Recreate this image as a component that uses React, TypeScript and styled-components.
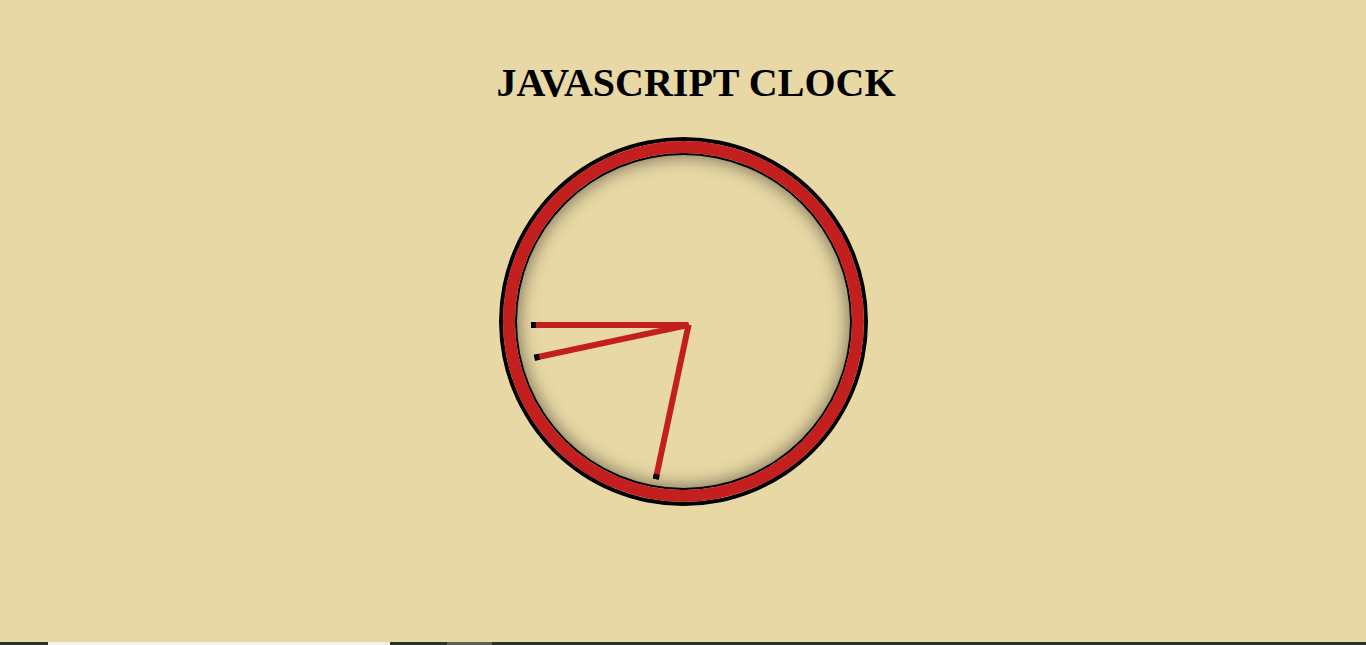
import styled, { createGlobalStyle } from 'styled-components';

// fixed time so the face matches the still picture
const TIME = { hours: 9, minutes: 43, seconds: 32 };

const GlobalStyle = createGlobalStyle`
	html,
	body {
		margin: 0;
		padding: 0;
		background: #e8d8a5;
		font-family: 'Liberation Serif', 'Times New Roman', serif;
	}
`;

const Page = styled.div`
	display: flex;
	flex-direction: column;
	min-height: 100vh;
`;

const Main = styled.main`
	flex: 1;
	display: flex;
	flex-direction: column;
	align-items: center;
	padding-top: 60px;
`;

const Title = styled.h1`
	margin: 0 0 35px 0;
	padding-left: 26px;
	font-size: 40px;
	font-weight: bold;
	line-height: 46px;
	color: #000;
`;

const Clock = styled.div`
	box-sizing: border-box;
	width: 361px;
	height: 361px;
	padding: 16px;
	border: 12px solid #c41f1f;
	border-radius: 50%;
	box-shadow:
		0 0 0 4px #000,
		inset 0 0 0 2px #000,
		inset 0 0 18px 3px rgba(0, 0, 0, 0.5);
`;

const Face = styled.div`
	position: relative;
	width: 100%;
	height: 100%;
`;

const Hand = styled.div`
	position: absolute;
	top: 50%;
	width: 50%;
	height: 6px;
	background: #c41f1f;
	border-left: 5px solid #000;
	transform-origin: 100%;
`;

const Taskbar = styled.div`
	display: flex;
	height: 3px;
	background: #2b312d;
`;

const TaskItem = styled.div<{ $width: number; $offset: number; $color: string }>`
	width: ${(p) => p.$width}px;
	margin-left: ${(p) => p.$offset}px;
	background: ${(p) => p.$color};
`;

const App = () => {
	const hourDeg = TIME.hours * 30 + 90;
	const minDeg = TIME.minutes * 6 + 90;
	const secDeg = TIME.seconds * 6 + 90;

	return (
		<>
			<GlobalStyle />
			<Page>
				<Main>
					<Title>JAVASCRIPT CLOCK</Title>
					<Clock>
						<Face>
							<Hand style={{ transform: `rotate(${hourDeg}deg)` }} />
							<Hand style={{ transform: `rotate(${minDeg}deg)` }} />
							<Hand style={{ transform: `rotate(${secDeg}deg)` }} />
						</Face>
					</Clock>
				</Main>
				<Taskbar>
					<TaskItem $offset={48} $width={342} $color="#f2f0ea" />
					<TaskItem $offset={57} $width={45} $color="#5b605b" />
				</Taskbar>
			</Page>
		</>
	);
};

export default App;
